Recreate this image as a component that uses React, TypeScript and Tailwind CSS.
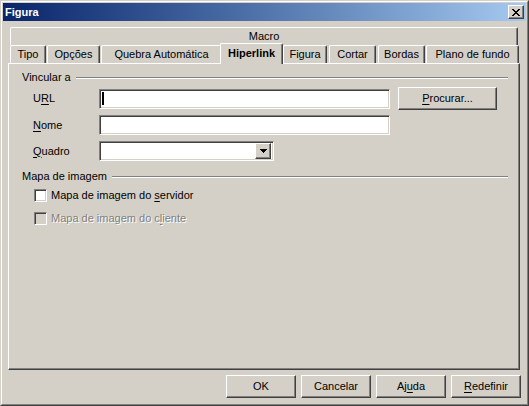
import type { ReactNode } from "react";

const raised =
  "border border-t-white border-l-white border-r-[#404040] border-b-[#404040] shadow-[inset_-1px_-1px_#808080]";
const sunken =
  "border border-t-[#808080] border-l-[#808080] border-r-white border-b-white shadow-[inset_1px_1px_#404040,inset_-1px_-1px_#d4d0c8]";

const tabs = [
  { label: "Tipo", cls: "w-[36px]" },
  { label: "Opções", cls: "ml-[1px] w-[53px]" },
  { label: "Quebra Automática", cls: "ml-[1px] w-[121px]" },
  { label: "Hiperlink", cls: "-ml-[2px] w-[63px]", active: true },
  { label: "Figura", cls: "w-[44px]" },
  { label: "Cortar", cls: "ml-[2px] w-[47px]" },
  { label: "Bordas", cls: "ml-[2px] w-[47px]" },
  { label: "Plano de fundo", cls: "ml-[1px] w-[93px]" },
];

function U({ children }: { children: ReactNode }) {
  return <span className="underline underline-offset-[2px]">{children}</span>;
}

function GroupLabel({ children, className }: { children: ReactNode; className: string }) {
  return (
    <div className={`flex h-[13px] items-center pl-[13px] pr-[11px] ${className}`}>
      <span className="whitespace-nowrap">{children}</span>
      <div className="ml-[5px] h-[2px] flex-1 border-t border-t-[#808080] border-b border-b-white" />
    </div>
  );
}

function Button({ children, className = "" }: { children: ReactNode; className?: string }) {
  return (
    <div className={`flex h-[23px] items-center justify-center ${raised} ${className}`}>
      {children}
    </div>
  );
}

function Checkbox({ label, disabled }: { label: ReactNode; disabled?: boolean }) {
  return (
    <div className="flex h-[13px] items-center gap-[4px] pl-[25px]">
      <div className={`h-[13px] w-[13px] ${sunken} ${disabled ? "bg-[#d4d0c8]" : "bg-white"}`} />
      <span
        className={
          disabled ? "text-[#808080] [text-shadow:1px_1px_#ffffff]" : "text-black"
        }
      >
        {label}
      </span>
    </div>
  );
}

export default function App() {
  return (
    <div className="h-[406px] w-[529px] border border-t-[#d4d0c8] border-l-[#d4d0c8] border-r-[#404040] border-b-[#404040] bg-[#d4d0c8] font-['Liberation_Sans',Arial,sans-serif] text-[11px] leading-[13px] text-black">
      <div className="flex h-full flex-col border border-t-white border-l-white border-r-[#808080] border-b-[#808080] p-px">
        {/* title bar */}
        <div className="flex h-[18px] items-center justify-between bg-gradient-to-r from-[#0a246a] to-[#a6caf0] pl-[2px] pr-[2px]">
          <span className="font-bold text-white">Figura</span>
          <div className={`flex h-[14px] w-[16px] items-center justify-center bg-[#d4d0c8] ${raised}`}>
            <svg width="8" height="7" viewBox="0 0 8 7" shapeRendering="crispEdges">
              <path
                d="M0 0h2v1h-2zM6 0h2v1h-2zM1 1h2v1h-2zM5 1h2v1h-2zM2 2h4v1h-4zM3 3h2v1h-2zM2 4h4v1h-4zM1 5h2v1h-2zM5 5h2v1h-2zM0 6h2v1h-2zM6 6h2v1h-2z"
                fill="#000"
              />
            </svg>
          </div>
        </div>

        {/* tabs */}
        <div className="ml-[7px] mt-[6px]">
          <div className="flex h-[18px] w-[508px] items-center justify-center rounded-t-[2px] border-t border-l border-r border-t-white border-l-white border-r-[#404040] shadow-[inset_-1px_0_#808080]">
            Macro
          </div>
          <div className="flex h-[18px] items-end">
            {tabs.map((t) =>
              t.active ? (
                <div
                  key={t.label}
                  className={`relative z-10 -mb-px flex h-[21px] justify-center rounded-t-[2px] border-t border-l border-r border-t-white border-l-white border-r-[#404040] bg-[#d4d0c8] shadow-[inset_-1px_0_#808080] ${t.cls}`}
                >
                  <span className="flex h-[18px] items-center font-bold">{t.label}</span>
                </div>
              ) : (
                <div
                  key={t.label}
                  className={`flex h-[18px] items-center justify-center whitespace-nowrap rounded-t-[2px] border-t border-l border-r border-t-white border-l-white border-r-[#404040] shadow-[inset_-1px_0_#808080] ${t.cls}`}
                >
                  {t.label}
                </div>
              )
            )}
          </div>
        </div>

        {/* panel */}
        <div className="ml-[5px] h-[307px] w-[512px] border border-t-white border-l-white border-r-[#404040] border-b-[#404040] shadow-[inset_-1px_-1px_#808080]">
          <GroupLabel className="mt-[7px]">Vincular a</GroupLabel>

          <div className="mt-[3px] flex h-[23px] items-center pl-[24px]">
            <span className="w-[66px]">
              U<U>R</U>L
            </span>
            <div className={`relative h-[20px] w-[291px] bg-white ${sunken}`}>
              <div className="absolute left-[2px] top-[2px] h-[13px] w-[2px] bg-black" />
            </div>
            <Button className="ml-[8px] w-[99px]">
              <span>
                <U>P</U>rocurar...
              </span>
            </Button>
          </div>

          <div className="mt-[5px] flex h-[20px] items-center pl-[24px]">
            <span className="w-[66px]">
              <U>N</U>ome
            </span>
            <div className={`h-[20px] w-[291px] bg-white ${sunken}`} />
          </div>

          <div className="mt-[6px] flex h-[20px] items-center pl-[24px]">
            <span className="w-[66px]">
              <U>Q</U>uadro
            </span>
            <div className={`flex h-[20px] w-[175px] items-center justify-end bg-white pr-[2px] ${sunken}`}>
              <div className={`flex h-[16px] w-[16px] items-center justify-center bg-[#d4d0c8] ${raised}`}>
                <svg width="7" height="4" viewBox="0 0 7 4" shapeRendering="crispEdges">
                  <path d="M0 0h7v1h-7zM1 1h5v1h-5zM2 2h3v1h-3zM3 3h1v1h-1z" fill="#000" />
                </svg>
              </div>
            </div>
          </div>

          <GroupLabel className="mt-[9px]">Mapa de imagem</GroupLabel>

          <div className="mt-[6px]">
            <Checkbox
              label={
                <>
                  Mapa de imagem do <U>s</U>ervidor
                </>
              }
            />
          </div>
          <div className="mt-[10px]">
            <Checkbox
              disabled
              label={
                <>
                  Mapa de imagem do c<U>l</U>iente
                </>
              }
            />
          </div>
        </div>

        {/* buttons */}
        <div className="mr-[5px] mt-[5px] flex justify-end gap-[5px]">
          <Button className="w-[70px]">OK</Button>
          <Button className="w-[70px]">Cancelar</Button>
          <Button className="w-[70px]">
            <span>
              Aj<U>u</U>da
            </span>
          </Button>
          <Button className="w-[70px]">
            <span>
              <U>R</U>edefinir
            </span>
          </Button>
        </div>
      </div>
    </div>
  );
}
